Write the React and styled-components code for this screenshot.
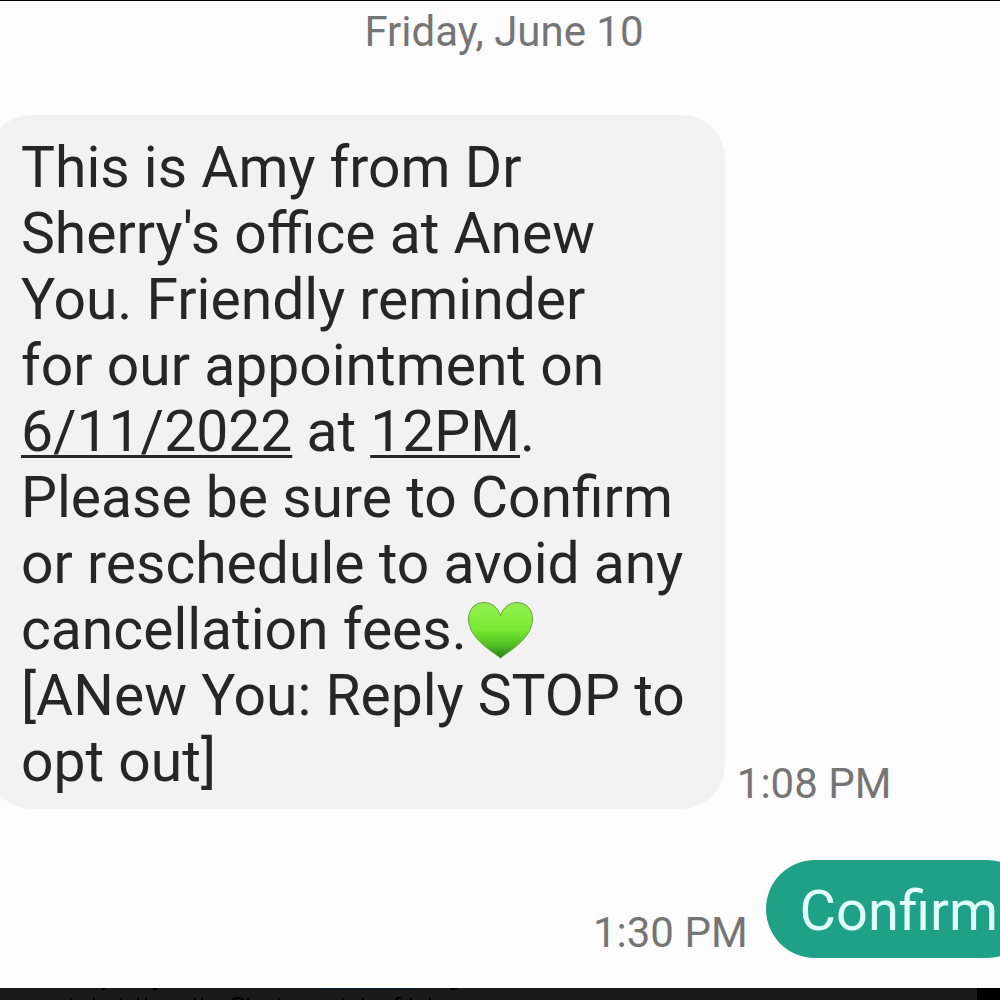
import styled, { createGlobalStyle } from 'styled-components';

const GlobalStyle = createGlobalStyle`
  * {
    box-sizing: border-box;
  }

  body {
    margin: 0;
    background-color: #fcfcfc;
    font-family: Roboto, 'Liberation Sans', sans-serif;
    overflow: hidden;
  }
`;

const AppContainer = styled.div`
  display: flex;
  flex-direction: column;
  min-height: 100vh;
  border-top: 1px solid #000;
  overflow: hidden;
`;

const DateHeader = styled.h1`
  margin: 0 0 58px;
  padding: 6px 0 0 8px;
  text-align: center;
  color: #757575;
  font-size: 42px;
  line-height: 50px;
  font-weight: 400;
`;

const Conversation = styled.main`
  display: flex;
  flex-direction: column;
  gap: 51px;
`;

const MessageRow = styled.div`
  display: flex;
  align-items: flex-end;
  justify-content: ${props => (props.$sent ? 'flex-end' : 'flex-start')};
  gap: ${props => (props.$sent ? '18px' : '12px')};
  margin-left: ${props => (props.$sent ? '0' : '-12px')};
  margin-right: ${props => (props.$sent ? '-36px' : '0')};
`;

const Bubble = styled.p`
  flex-shrink: 0;
  margin: 0;
  padding: ${props => (props.$sent ? '18px 38px 14px 34px' : '20px 40px 14px 33px')};
  border-radius: ${props => (props.$sent ? '49px' : '44px')};
  background-color: ${props => (props.$sent ? '#1ea187' : '#f2f2f2')};
  color: ${props => (props.$sent ? '#e0fffa' : '#262626')};
  font-size: ${props => (props.$sent ? '56px' : '57px')};
  line-height: 66px;
`;

const MessageLink = styled.a`
  color: inherit;
  text-decoration: underline;
  text-decoration-thickness: 3px;
  text-underline-offset: 4px;
`;

const Heart = styled.svg`
  width: 67px;
  height: 60px;
  vertical-align: -11px;
`;

const Time = styled.time`
  flex-shrink: 0;
  color: #757575;
  font-size: 42px;
  line-height: 50px;
  white-space: nowrap;
`;

const BottomBar = styled.footer`
  height: 12px;
  margin-top: auto;
  background: #191919;
  border-right: 23px solid #000;
`;

const BarMarks = styled.svg`
  display: block;
  width: 500px;
  height: 12px;
`;

// x positions of the strokes peeking over the bottom edge
const strokes = [71, 94, 121, 138, 146, 195, 202, 248, 279, 343, 363, 411, 430];

function GreenHeart() {
  return (
    <Heart viewBox='0 0 67 60' role='img' aria-label='Green heart'>
      <defs>
        <linearGradient id='heart-fill' x1='0' y1='0' x2='0' y2='1'>
          <stop offset='0' stopColor='#93e854' />
          <stop offset='0.15' stopColor='#8cf048' />
          <stop offset='0.5' stopColor='#78e832' />
          <stop offset='0.78' stopColor='#4fbd22' />
          <stop offset='1' stopColor='#267d13' />
        </linearGradient>
      </defs>
      <path
        d='M33.5 58C28 53 1.5 39 1.5 19C1.5 9 8 2.5 17 2.5C25 2.5 31.5 8 33.5 16C35.5 8 42 2.5 50 2.5C59 2.5 65.5 9 65.5 19C65.5 39 39 53 33.5 58Z'
        fill='url(#heart-fill)'
        stroke='#68a53c'
        strokeWidth='1'
      />
    </Heart>
  );
}

function App() {
  return (
    <AppContainer>
      <GlobalStyle />
      <DateHeader>Friday, June 10</DateHeader>
      <Conversation>
        <MessageRow>
          <Bubble>
            This is Amy from Dr
            <br />
            Sherry&apos;s office at Anew
            <br />
            You. Friendly reminder
            <br />
            for our appointment on
            <br />
            <MessageLink href='#date'>6/11/2022</MessageLink> at{' '}
            <MessageLink href='#time'>12PM</MessageLink>.
            <br />
            Please be sure to Confirm
            <br />
            or reschedule to avoid any
            <br />
            cancellation fees.
            <GreenHeart />
            <br />
            [ANew You: Reply STOP to
            <br />
            opt out]
          </Bubble>
          <Time>1:08 PM</Time>
        </MessageRow>
        <MessageRow $sent>
          <Time>1:30 PM</Time>
          <Bubble $sent>Confirm</Bubble>
        </MessageRow>
      </Conversation>
      <BottomBar>
        <BarMarks viewBox='0 0 500 12' aria-hidden='true'>
          {strokes.map(x => (
            <path key={x} d={`M${x} 10v2`} stroke='#000' strokeWidth='2' />
          ))}
          <path d='M232 12q6 -4 12 0M396 12q1 -3 5 -2' stroke='#000' strokeWidth='2' fill='none' />
          <path d='M102 1h3M153 1h4M450 1h7' stroke='#000' strokeWidth='2' />
          <path d='M319 1h96' stroke='#0b1826' strokeWidth='2' />
        </BarMarks>
      </BottomBar>
    </AppContainer>
  );
}

export default App;
